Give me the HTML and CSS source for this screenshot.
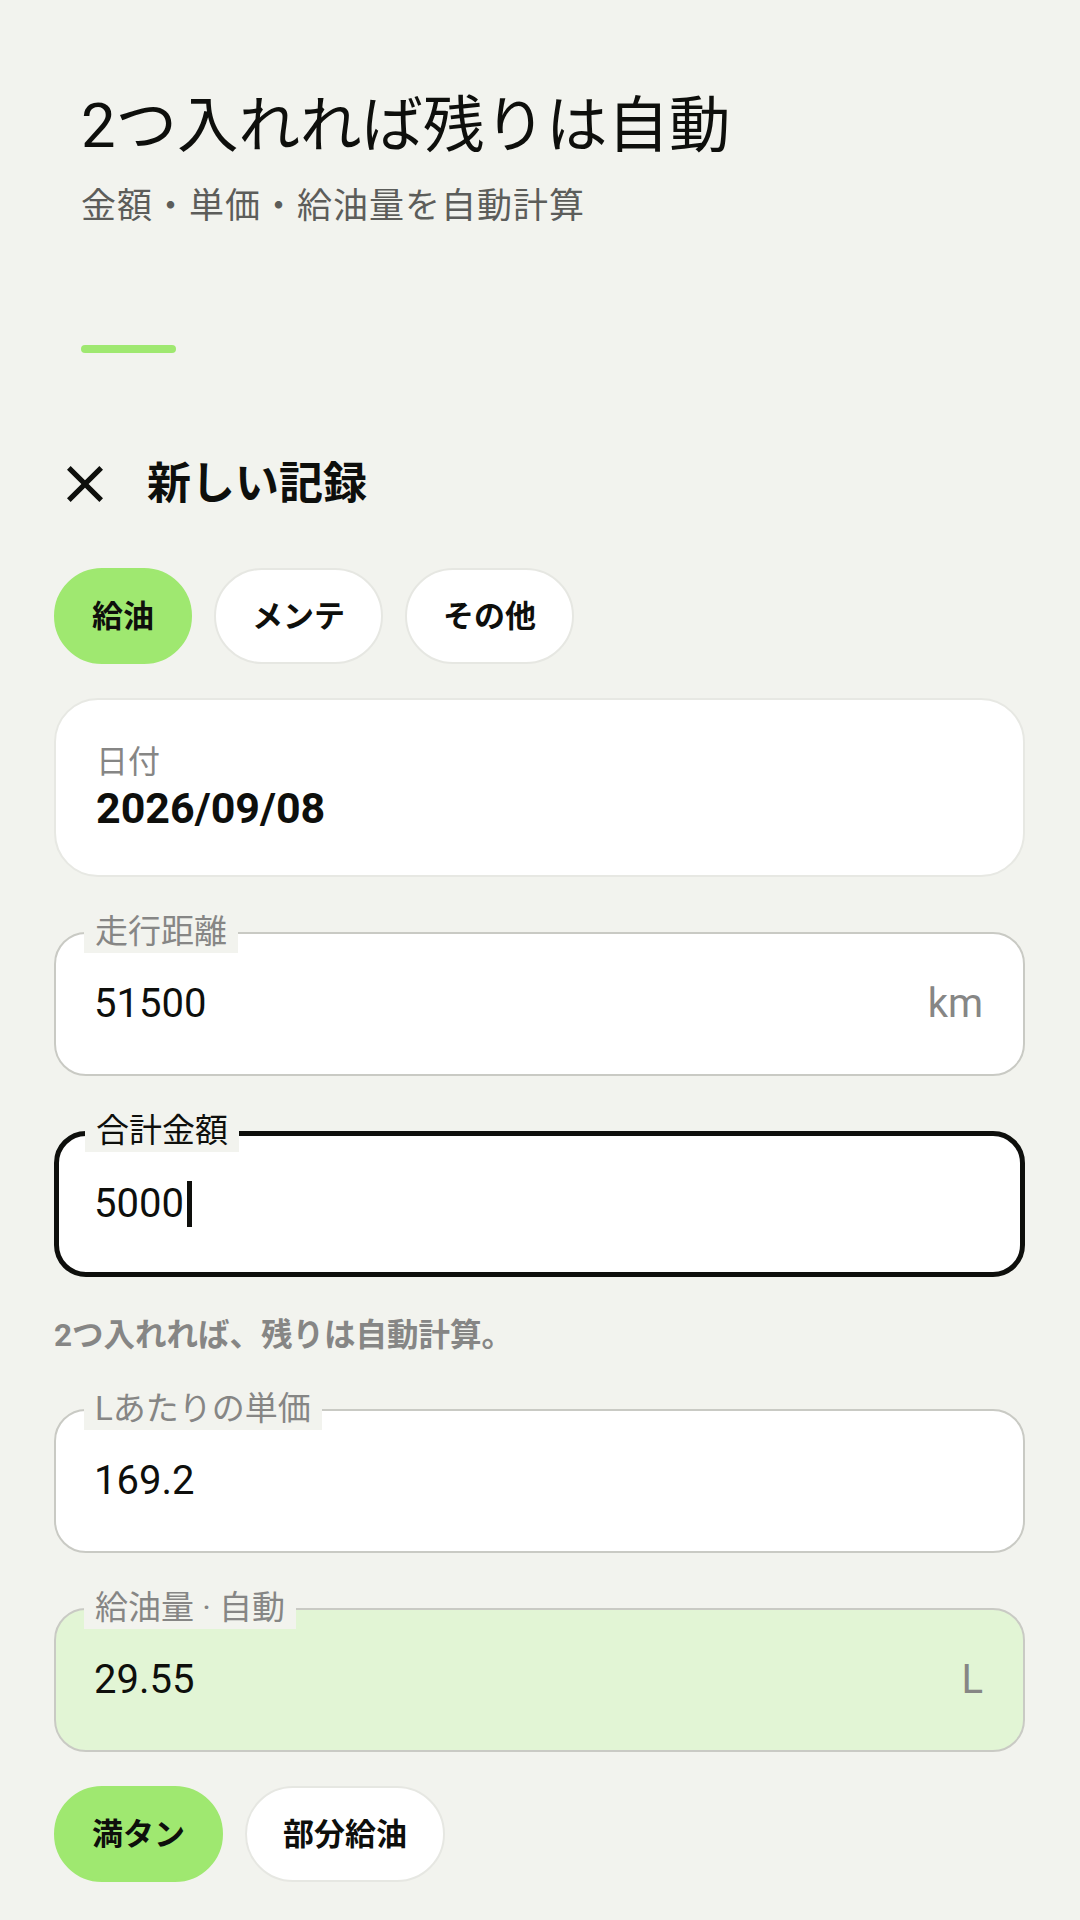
FILE: index.html
```html
<!DOCTYPE html>
<html lang="ja">
<head>
<meta charset="utf-8">
<title>新しい記録</title>
<link rel="stylesheet" href="styles.css">
</head>
<body>
<div class="intro">
  <h1 class="title">2つ入れれば残りは自動</h1>
  <p class="subtitle">金額・単価・給油量を自動計算</p>
  <div class="accent"></div>
</div>
<div class="sheet">
  <div class="header">
    <svg class="close" viewBox="5 5 14 14" width="36" height="36" aria-hidden="true">
      <path d="M19 6.41L17.59 5 12 10.59 6.41 5 5 6.41 10.59 12 5 17.59 6.41 19 12 13.41 17.59 19 19 17.59 13.41 12z" fill="#0e0f0c"/>
    </svg>
    <h2 class="header-title">新しい記録</h2>
  </div>
  <div class="chips">
    <span class="chip chip-on">給油</span>
    <span class="chip">メンテ</span>
    <span class="chip">その他</span>
  </div>
  <div class="date-card">
    <div class="date-label">日付</div>
    <div class="date-value">2026/09/08</div>
  </div>
  <div class="field">
    <span class="field-label">走行距離</span>
    <span class="field-value">51500</span>
    <span class="field-unit">km</span>
  </div>
  <div class="field field-focused">
    <span class="field-label">合計金額</span>
    <span class="field-value">5000</span><span class="caret"></span>
  </div>
  <p class="helper">2つ入れれば、残りは自動計算。</p>
  <div class="field field-after-helper">
    <span class="field-label">Lあたりの単価</span>
    <span class="field-value">169.2</span>
  </div>
  <div class="field field-auto">
    <span class="field-label">給油量 · 自動</span>
    <span class="field-value">29.55</span>
    <span class="field-unit">L</span>
  </div>
  <div class="chips chips-bottom">
    <span class="chip chip-on">満タン</span>
    <span class="chip">部分給油</span>
  </div>
</div>
</body>
</html>
```

FILE: styles.css
```css
* { box-sizing: border-box; }
html, body {
  margin: 0;
  padding: 0;
  background: #f2f3ee;
}
body {
  width: 1080px;
  height: 1920px;
  overflow: hidden;
  font-family: Roboto, "Noto Sans CJK JP", sans-serif;
  color: #0e0f0c;
}
.intro {
  padding: 90px 81px 0;
}
.title {
  margin: 0;
  font-size: 61.5px;
  font-weight: 400;
  line-height: 72px;
  letter-spacing: 0;
}
.subtitle {
  margin: 23px 0 0;
  font-size: 35px;
  line-height: 44px;
  color: #5c5d5a;
  letter-spacing: 1px;
}
.accent {
  margin-top: 116px;
  width: 95px;
  height: 8px;
  border-radius: 4px;
  background: #9fe870;
}
.sheet {
  padding: 0 55px 0 54px;
}
.header {
  display: flex;
  align-items: center;
  gap: 44px;
  margin-top: 107px;
  padding-left: 13px;
  height: 48px;
}
.close {
  display: block;
  flex: none;
}
.header-title {
  margin: 0;
  font-size: 44px;
  font-weight: 700;
  line-height: 48px;
}
.chips {
  display: flex;
  gap: 22px;
  margin-top: 60px;
}
.chip {
  display: flex;
  align-items: center;
  height: 96px;
  padding: 0 36px;
  border: 2px solid #e6e7e2;
  border-radius: 48px;
  background: #fff;
  font-size: 31px;
  font-weight: 700;
  line-height: 1;
}
.chip-on {
  background: #9fe870;
  border-color: #9fe870;
}
.date-card {
  margin-top: 34px;
  height: 179px;
  border: 2px solid #e7e8e3;
  border-radius: 44px;
  background: #fff;
  display: flex;
  flex-direction: column;
  justify-content: center;
  padding: 0 40px;
}
.date-label {
  font-size: 32px;
  line-height: 40px;
  color: #868685;
}
.date-value {
  font-size: 43px;
  font-weight: 700;
  line-height: 52px;
}
.field {
  position: relative;
  display: flex;
  align-items: center;
  height: 144px;
  margin-top: 55px;
  padding: 0 40px 0 38px;
  border: 2.5px solid #c9cac4;
  border-radius: 32px;
  background: #fff;
}
.field-label {
  position: absolute;
  left: 28px;
  top: -23px;
  padding: 0 11px;
  background: #f2f3ee;
  font-size: 33px;
  line-height: 42px;
  color: #868685;
}
.field-value {
  font-size: 40px;
  line-height: 48px;
}
.field-unit {
  margin-left: auto;
  font-size: 40px;
  line-height: 48px;
  color: #868685;
}
.field-focused {
  height: 146px;
  margin-top: 55px;
  border: 5px solid #0e0f0c;
  padding-left: 35px;
}
.field-focused .field-label {
  left: 26px;
  top: -26px;
  color: #0e0f0c;
}
.caret {
  display: block;
  width: 5px;
  height: 46px;
  margin-left: 3px;
  background: #0e0f0c;
}
.field-after-helper {
  margin-top: 53px;
}
.field-auto {
  background: #e2f5d5;
}
.helper {
  margin: 39px 0 0;
  font-size: 31.5px;
  font-weight: 700;
  line-height: 40px;
  color: #868685;
}
.chips-bottom {
  margin-top: 34px;
}
```
